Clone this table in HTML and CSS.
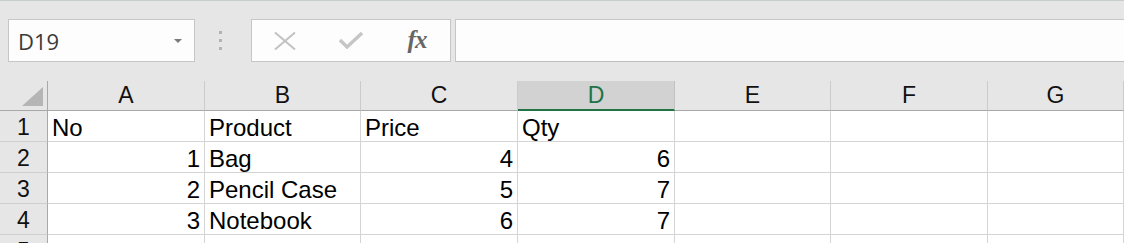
FILE: index.html
```html
<!doctype html>
<html>
	<head>
		<meta charset="utf-8">
		<link rel="stylesheet" href="styles.css">
	</head>
	<body>
		<div class="formula-bar">
			<div class="name-box">
				<span>D19</span>
				<span class="caret"></span>
			</div>
			<div class="grip"><i></i><i></i><i></i></div>
			<div class="fx-buttons">
				<svg width="22" height="18" viewBox="0 0 22 18"><path d="M1 0.5 L21 17.5 M21 0.5 L1 17.5" stroke="#c2c2c2" stroke-width="2" fill="none"/></svg>
				<svg width="24" height="17" viewBox="0 0 24 17"><path d="M1 8 L8 15 L23 1" stroke="#c6c6c6" stroke-width="3.4" fill="none"/></svg>
				<span class="fx">fx</span>
			</div>
			<div class="formula-input"></div>
		</div>

		<div class="sheet">
			<div class="corner"><svg width="21" height="19" viewBox="0 0 21 19"><polygon points="21,0 21,19 0,19" fill="#b5b5b5"/></svg></div>
			<div class="col-head">A</div>
			<div class="col-head">B</div>
			<div class="col-head">C</div>
			<div class="col-head sel">D</div>
			<div class="col-head">E</div>
			<div class="col-head">F</div>
			<div class="col-head">G</div>

			<div class="row-head">1</div>
			<div class="cell">No</div>
			<div class="cell">Product</div>
			<div class="cell">Price</div>
			<div class="cell">Qty</div>
			<div class="cell"></div>
			<div class="cell"></div>
			<div class="cell"></div>

			<div class="row-head">2</div>
			<div class="cell num">1</div>
			<div class="cell">Bag</div>
			<div class="cell num">4</div>
			<div class="cell num">6</div>
			<div class="cell"></div>
			<div class="cell"></div>
			<div class="cell"></div>

			<div class="row-head">3</div>
			<div class="cell num">2</div>
			<div class="cell">Pencil Case</div>
			<div class="cell num">5</div>
			<div class="cell num">7</div>
			<div class="cell"></div>
			<div class="cell"></div>
			<div class="cell"></div>

			<div class="row-head">4</div>
			<div class="cell num">3</div>
			<div class="cell">Notebook</div>
			<div class="cell num">6</div>
			<div class="cell num">7</div>
			<div class="cell"></div>
			<div class="cell"></div>
			<div class="cell"></div>

			<div class="row-head">5</div>
			<div class="cell"></div>
			<div class="cell"></div>
			<div class="cell"></div>
			<div class="cell"></div>
			<div class="cell"></div>
			<div class="cell"></div>
			<div class="cell"></div>
		</div>
	</body>
</html>
```

FILE: styles.css
```css
body, html {
	margin: 0;
	padding: 0;
	height: 100%;
	overflow: hidden;
	background: #e6e6e6;
	font-family: "Liberation Sans", Arial, sans-serif;
}

/* name box + formula entry */
.formula-bar {
	height: 81px;
	box-sizing: border-box;
	border-top: 1px solid #c5d0cb;
	padding: 18px 0 0 8px;
	display: flex;
	align-items: flex-start;
}

.name-box {
	width: 187px;
	height: 43px;
	box-sizing: border-box;
	background: #fdfdfd;
	border: 1px solid #c6c6c6;
	display: flex;
	align-items: center;
	justify-content: space-between;
	padding: 0 12px 0 9px;
	font-family: "Open Sans", sans-serif;
	font-size: 22px;
	color: #3a3a3a;
}

.caret {
	width: 0;
	height: 0;
	border-left: 4px solid transparent;
	border-right: 4px solid transparent;
	border-top: 4px solid #7a7a7a;
	margin-top: 1px;
}

.grip {
	width: 51px;
	height: 43px;
	padding-right: 5px;
	display: flex;
	flex-direction: column;
	align-items: center;
	justify-content: center;
	gap: 5px;
}

.grip i {
	width: 3px;
	height: 3px;
	background: #b3b3b3;
}

.fx-buttons {
	width: 200px;
	height: 43px;
	box-sizing: border-box;
	background: #fdfdfd;
	border: 1px solid #c6c6c6;
	display: grid;
	grid-template-columns: 1fr 1fr 1fr;
	align-items: center;
	justify-items: center;
}

.fx {
	font-family: "Liberation Serif", serif;
	font-style: italic;
	font-weight: bold;
	font-size: 25px;
	color: #666;
	letter-spacing: -1px;
	margin-top: -2px;
}

.formula-input {
	flex: 1;
	height: 43px;
	box-sizing: border-box;
	margin-left: 4px;
	margin-right: -4px;
	background: #fdfdfd;
	border: 1px solid #c6c6c6;
	border-bottom-color: #bdbdbd;
}

/* worksheet grid */
.sheet {
	display: grid;
	grid-template-columns: 48px 157px 156px 157px 157px 156px 157px 1fr;
	grid-template-rows: 30px repeat(5, 31px);
	background: #fff;
}

.sheet > * {
	box-sizing: border-box;
}

.corner {
	background: #e6e6e6;
	border-right: 1px solid #a8a8a8;
	border-bottom: 1px solid #a8a8a8;
	display: flex;
	justify-content: flex-end;
	align-items: flex-end;
	padding: 0 4px 4px 0;
}

.col-head {
	background: #e6e6e6;
	border-right: 1px solid #cbcbcb;
	border-bottom: 1px solid #a8a8a8;
	text-align: center;
	font-size: 23px;
	line-height: 29px;
	color: #111;
}

.col-head.sel {
	background: #d2d2d2;
	color: #217346;
	border-right-color: #c2c2c2;
	border-bottom: 2px solid #217346;
}

.row-head {
	background: #e6e6e6;
	border-right: 1px solid #a8a8a8;
	border-bottom: 1px solid #cfcfcf;
	text-align: center;
	font-size: 23px;
	line-height: 27px;
	padding-top: 3px;
	color: #111;
}

.cell {
	border-right: 1px solid #d4d4d4;
	border-bottom: 1px solid #d4d4d4;
	font-size: 24px;
	line-height: 27px;
	padding: 3px 4px 0 4px;
	color: #000;
	white-space: nowrap;
	overflow: hidden;
}

.cell.num {
	text-align: right;
}
```
